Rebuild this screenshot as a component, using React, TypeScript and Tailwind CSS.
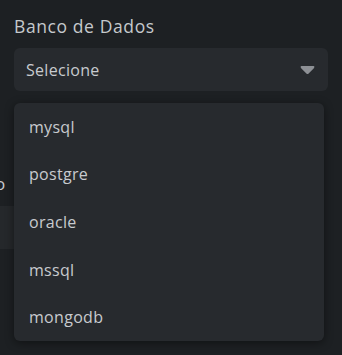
import React from 'react';

const options = ['mysql', 'postgre', 'oracle', 'mssql', 'mongodb'];

export default function App() {
  return (
    <div
      className="relative h-[355px] w-[342px] overflow-hidden bg-[#1d2023] text-[#c8cbcf]"
      style={{ fontFamily: '"Open Sans", "Noto Sans", sans-serif' }}
    >
      {/* Form field behind */}
      <div className="px-[14px] pt-[14px]">
        <label className="block text-[17.5px] leading-[24px] tracking-[0.6px] text-[#c5c9cc]">Banco de Dados</label>
        <div className="mt-[10px] flex h-[43px] items-center justify-between rounded-[6px] bg-[#272a2e] pl-[12px] pr-[13px]">
          <span className="text-[16px] tracking-[0.3px] text-[#c8cbcf]">Selecione</span>
          <svg width="15" height="10" viewBox="0 0 15 10" className="text-[#8d9095]">
            <path d="M1.6 1 H13.4 Q14.8 1 14.2 2.4 L13.6 3.6 L8.6 8.6 Q7.5 9.6 6.4 8.6 L1.4 3.6 L0.8 2.4 Q0.2 1 1.6 1 Z" fill="currentColor" />
          </svg>
        </div>
      </div>

      {/* Partially hidden content on the left */}
      <div className="mt-[80px] h-[26px] w-[5px] overflow-hidden">
        <span className="-ml-[5px] block text-[17px] leading-[26px]">o</span>
      </div>
      <div className="mt-[9px] h-[43px] w-[20px] bg-[#25282b]" />

      {/* Open dropdown menu */}
      <ul className="absolute left-[14px] top-[103px] w-[310px] rounded-[6px] bg-[#272a2e] shadow-[0_2px_10px_rgba(0,0,0,0.45)]">
        {options.map((o) => (
          <li key={o} className="flex h-[47.6px] items-center pl-[15px] text-[16px] tracking-[0.3px] text-[#c8cbcf]">
            {o}
          </li>
        ))}
      </ul>
    </div>
  );
}
